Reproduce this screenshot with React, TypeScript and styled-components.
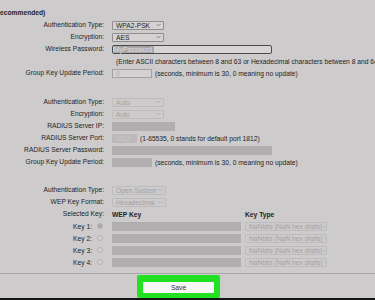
import styled, { createGlobalStyle } from 'styled-components';

const GlobalStyle = createGlobalStyle`
  html, body {
    margin: 0;
    padding: 0;
    background: #cdcbcc;
  }
`;

const Chevron = () => (
  <svg width="5" height="4" viewBox="0 0 5 4">
    <polyline points="0.5,1 2.5,3 4.5,1" fill="none" stroke="currentColor" strokeWidth="0.8" />
  </svg>
);

const App = () => {
  return (
    <Page>
      <GlobalStyle />
      <Heading>ecommended)</Heading>

      <Section>
        <Label>Authentication Type:</Label>
        <Cell>
          <Select $width={52}>
            WPA2-PSK
            <Chevron />
          </Select>
        </Cell>
        <Label>Encryption:</Label>
        <Cell>
          <Select $width={52}>
            AES
            <Chevron />
          </Select>
        </Cell>
        <Label>Wireless Password:</Label>
        <Cell>
          <PasswordInput>
            <Selected>MyPassword</Selected>
          </PasswordInput>
        </Cell>
        <span />
        <Cell>
          <Hint>(Enter ASCII characters between 8 and 63 or Hexadecimal characters between 8 and 64)</Hint>
        </Cell>
        <Label>Group Key Update Period:</Label>
        <Cell>
          <TextInput $width={40}>0</TextInput>
          <Note>(seconds, minimum is 30, 0 meaning no update)</Note>
        </Cell>
      </Section>

      <Section $top={17}>
        <Label>Authentication Type:</Label>
        <Cell>
          <Select $width={52} $disabled>
            Auto
            <Chevron />
          </Select>
        </Cell>
        <Label>Encryption:</Label>
        <Cell>
          <Select $width={52} $disabled>
            Auto
            <Chevron />
          </Select>
        </Cell>
        <Label>RADIUS Server IP:</Label>
        <Cell>
          <Disabled $width={63} />
        </Cell>
        <Label>RADIUS Server Port:</Label>
        <Cell>
          <Disabled $width={25} $light>1812</Disabled>
          <Note>(1-65535, 0 stands for default port 1812)</Note>
        </Cell>
        <Label>RADIUS Server Password:</Label>
        <Cell>
          <Disabled $width={160} />
        </Cell>
        <Label>Group Key Update Period:</Label>
        <Cell>
          <Disabled $width={40} />
          <Note>(seconds, minimum is 30, 0 meaning no update)</Note>
        </Cell>
      </Section>

      <Section $top={16}>
        <Label>Authentication Type:</Label>
        <Cell>
          <Select $width={54} $disabled>
            Open System
            <Chevron />
          </Select>
        </Cell>
        <Label>WEP Key Format:</Label>
        <Cell>
          <Select $width={54} $disabled>
            Hexadecimal
            <Chevron />
          </Select>
        </Cell>
        <Label>Selected Key:</Label>
        <Cell>
          <ColHead $width={133}>WEP Key</ColHead>
          <ColHead>Key Type</ColHead>
        </Cell>
        {[1, 2, 3, 4].map((n) => (
          <KeyRow key={n} n={n} />
        ))}
      </Section>

      <Footer>
        <Highlight>
          <SaveButton>Save</SaveButton>
        </Highlight>
      </Footer>
      <BottomBar />
    </Page>
  );
};

const KeyRow = ({ n }: { n: number }) => (
  <>
    <KeyLabel>
      Key {n}:
      <Radio $checked={n === 1} />
    </KeyLabel>
    <Cell>
      <Disabled $width={129} />
      <Select $width={82} $disabled $gap={4}>
        NaNbits (NaN hex digits)
        <Chevron />
      </Select>
    </Cell>
  </>
);

export default App;

const Page = styled.div`
  width: 375px;
  height: 300px;
  overflow: hidden;
  background: #cdcbcc;
  color: #1e1e1e;
  font-family: 'Liberation Sans', Arial, sans-serif;
  font-size: 6.7px;
  display: flex;
  flex-direction: column;
`;

const Heading = styled.div`
  margin-top: 7px;
  height: 12px;
  line-height: 12px;
  font-weight: bold;
  white-space: nowrap;
`;

const Section = styled.div<{ $top?: number }>`
  display: grid;
  grid-template-columns: 104px 1fr;
  grid-auto-rows: 12px;
  column-gap: 8px;
  margin-top: ${({ $top }) => $top ?? 0}px;
`;

const Label = styled.div`
  text-align: right;
  line-height: 12px;
  white-space: nowrap;
`;

const KeyLabel = styled.div`
  display: flex;
  align-items: center;
  justify-content: flex-end;
  gap: 5px;
  padding-right: 1px;
  white-space: nowrap;
`;

const Radio = styled.span<{ $checked?: boolean }>`
  width: 4px;
  height: 4px;
  border-radius: 50%;
  border: 0.8px solid #b4b2b3;
  background: ${({ $checked }) => ($checked ? '#aaa8a9' : '#d3d1d2')};
`;

const Cell = styled.div`
  display: flex;
  align-items: center;
  white-space: nowrap;
  min-width: 0;
`;

const Select = styled.div<{ $width: number; $disabled?: boolean; $gap?: number }>`
  box-sizing: border-box;
  width: ${({ $width }) => $width}px;
  height: 9px;
  margin-left: ${({ $gap }) => $gap ?? 0}px;
  padding: 0 2px 0 3px;
  display: flex;
  align-items: center;
  justify-content: space-between;
  border: 1px solid ${({ $disabled }) => ($disabled ? '#bdbbbc' : '#8f8d8e')};
  border-radius: 1px;
  background: ${({ $disabled }) => ($disabled ? '#cdcbcc' : '#d4d2d3')};
  color: ${({ $disabled }) => ($disabled ? '#a3a1a2' : '#1e1e1e')};
  overflow: hidden;
  svg {
    flex-shrink: 0;
    color: ${({ $disabled }) => ($disabled ? '#b0aeaf' : '#777')};
  }
`;

const PasswordInput = styled.div`
  box-sizing: border-box;
  width: 160px;
  height: 9px;
  padding: 0 1px;
  display: flex;
  align-items: center;
  border: 1px solid #4a4a4a;
  border-radius: 2px;
  background: #d6d4d5;
`;

const Selected = styled.span`
  width: 40px;
  background: #a6a4a5;
  color: #e4e2e3;
  line-height: 7px;
`;

const Hint = styled.span`
  margin-left: 4px;
`;

const TextInput = styled.div<{ $width: number }>`
  box-sizing: border-box;
  width: ${({ $width }) => $width}px;
  height: 9px;
  padding-left: 3px;
  display: flex;
  align-items: center;
  border: 1px solid #a2a0a1;
  background: #d4d2d3;
  color: #a8a6a7;
`;

const Disabled = styled.div<{ $width: number; $light?: boolean }>`
  box-sizing: border-box;
  width: ${({ $width }) => $width}px;
  height: 9px;
  padding-left: 3px;
  display: flex;
  align-items: center;
  background: ${({ $light }) => ($light ? '#bbb9ba' : '#b0aeaf')};
  color: #cbc9ca;
`;

const Note = styled.span`
  margin-left: 3px;
`;

const ColHead = styled.span<{ $width?: number }>`
  font-weight: bold;
  width: ${({ $width }) => ($width ? `${$width}px` : 'auto')};
`;

const Footer = styled.div`
  margin-top: 5px;
  border-top: 1px solid #a9a7a8;
  flex: 1;
  display: flex;
  align-items: flex-end;
  padding-left: 137px;
`;

const Highlight = styled.div`
  box-sizing: border-box;
  width: 83px;
  height: 23px;
  padding: 7px 6px 5px;
  background: #22e122;
  border-radius: 2px;
`;

const SaveButton = styled.div`
  height: 11px;
  background: #f7f7f7;
  border-radius: 1px;
  display: flex;
  align-items: center;
  justify-content: center;
  color: #333;
`;

const BottomBar = styled.div`
  height: 2px;
  background: #141414;
`;
